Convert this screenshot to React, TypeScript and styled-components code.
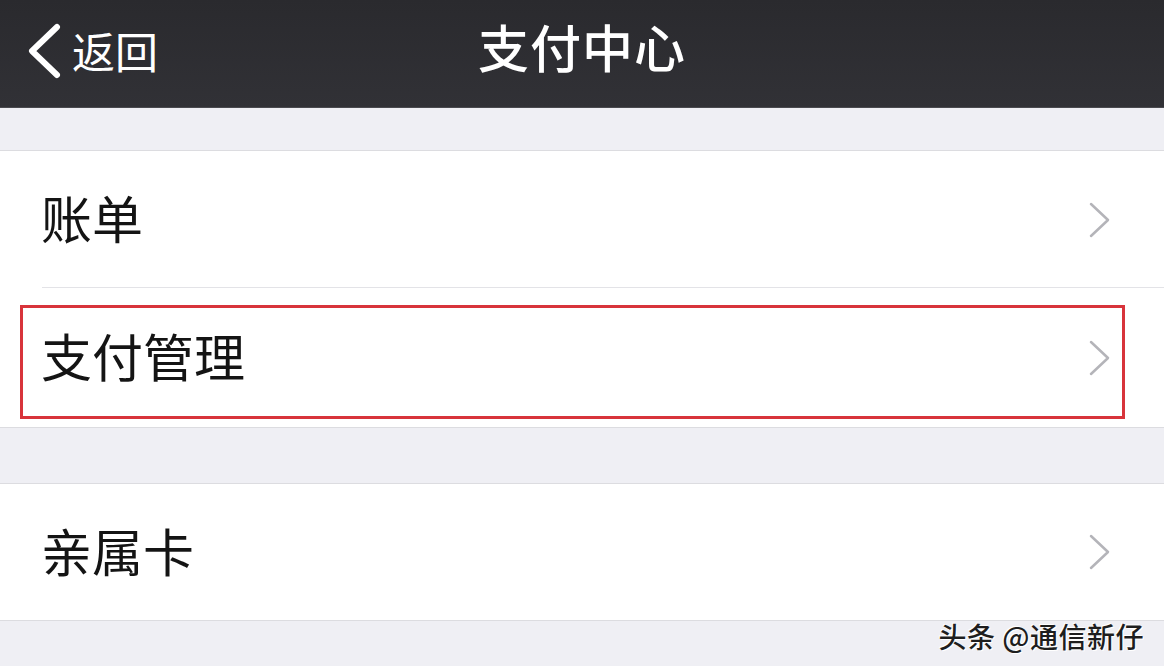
import styled, { createGlobalStyle } from "styled-components";

const GlobalStyle = createGlobalStyle`
  html, body {
    margin: 0;
    padding: 0;
    background: #efeff4;
  }
  body {
    font-family: "Noto Sans CJK SC", "Noto Sans", sans-serif;
  }
`;

const Page = styled.div`
  position: relative;
  width: 1164px;
  height: 666px;
  overflow: hidden;
  background: #efeff4;
`;

const NavBar = styled.header`
  height: 107px;
  display: grid;
  grid-template-columns: 1fr auto 1fr;
  align-items: center;
  background: linear-gradient(180deg, #2a2a2e 0%, #313136 100%);
  border-bottom: 1px solid #4a4a4f;
  color: #fff;
`;

const BackButton = styled.div`
  display: flex;
  align-items: center;
  gap: 10px;
  padding-left: 26px;
  font-size: 43px;
  line-height: 1;
  padding-bottom: 6px;
`;

const Title = styled.h1`
  margin: 0;
  font-size: 51px;
  font-weight: 500;
  letter-spacing: 1px;
  line-height: 1;
  padding-bottom: 14px;
`;

const Spacer = styled.div<{ $h: number }>`
  height: ${(p) => p.$h}px;
`;

const Group = styled.section`
  background: #fff;
  border-top: 1px solid #dcdce0;
  border-bottom: 1px solid #dcdce0;
`;

const Row = styled.div<{ $h: number; $divider?: boolean }>`
  position: relative;
  height: ${(p) => p.$h}px;
  display: flex;
  align-items: center;
  justify-content: space-between;
  padding-left: 41px;
  padding-right: 52px;
  box-sizing: border-box;

  ${(p) =>
    p.$divider &&
    `
    &::after {
      content: "";
      position: absolute;
      left: 42px;
      right: 0;
      bottom: 0;
      height: 1px;
      background: #e3e3e7;
    }
  `}
`;

const Label = styled.span`
  font-size: 51px;
  color: #141414;
  line-height: 1;
  padding-bottom: 4px;
`;

const Highlight = styled.div`
  position: absolute;
  left: 20px;
  right: 39px;
  top: 17px;
  bottom: 8px;
  border: 3px solid #d8343b;
  pointer-events: none;
`;

const Watermark = styled.div`
  position: absolute;
  right: 20px;
  bottom: 16px;
  font-size: 28px;
  font-weight: 500;
  line-height: 1;
  color: #1e1e1e;
  text-shadow: 1px 1px 0 #fff, -1px -1px 0 #fff;
  letter-spacing: 0.5px;
`;

function Chevron() {
  return (
    <svg width="24" height="36" viewBox="0 0 24 36">
      <path
        d="M3 2 L20 18 L3 34"
        fill="none"
        stroke="#b4b4b9"
        strokeWidth="2.5"
        strokeLinecap="round"
        strokeLinejoin="round"
      />
    </svg>
  );
}

function BackArrow() {
  return (
    <svg width="36" height="56" viewBox="0 0 36 56">
      <path
        d="M31 4 L6 28 L31 52"
        fill="none"
        stroke="#fff"
        strokeWidth="6"
        strokeLinecap="round"
        strokeLinejoin="round"
      />
    </svg>
  );
}

export default function App() {
  return (
    <>
      <GlobalStyle />
      <Page>
        <NavBar>
          <BackButton>
            <BackArrow />
            <span>返回</span>
          </BackButton>
          <Title>支付中心</Title>
          <div />
        </NavBar>

        <Spacer $h={42} />
        <Group>
          <Row $h={137} $divider>
            <Label>账单</Label>
            <Chevron />
          </Row>
          <Row $h={139}>
            <Label>支付管理</Label>
            <Chevron />
            <Highlight />
          </Row>
        </Group>

        <Spacer $h={55} />
        <Group>
          <Row $h={136}>
            <Label>亲属卡</Label>
            <Chevron />
          </Row>
        </Group>

        <Watermark>头条 @通信新仔</Watermark>
      </Page>
    </>
  );
}
